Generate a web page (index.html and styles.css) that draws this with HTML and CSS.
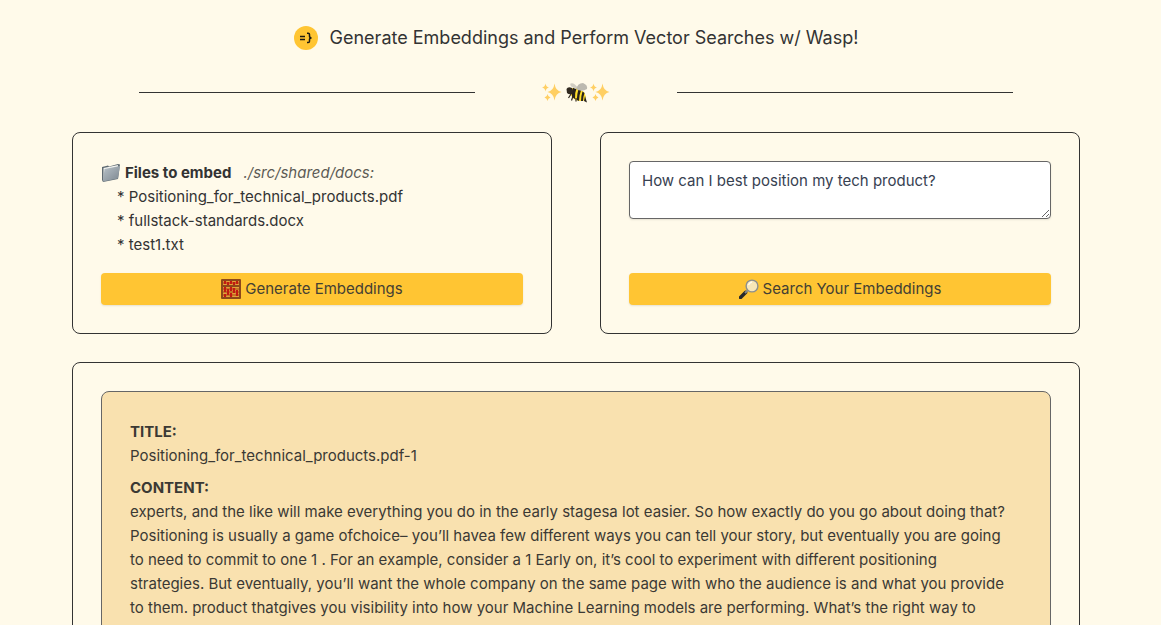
FILE: index.html
```html
<!DOCTYPE html>
<html lang="en">
<head>
<meta charset="utf-8">
<meta name="viewport" content="width=device-width, initial-scale=1">
<title>Generate Embeddings</title>
<link rel="stylesheet" href="styles.css">
</head>
<body>
<main class="page">
  <header class="header">
    <svg class="logo" viewBox="0 0 24 24" aria-hidden="true">
      <circle cx="12" cy="12" r="12" fill="#ffc533"/>
      <path d="M6 10.400h5M6 13.400h5M13 7.200h1.200q1.300 0 1.300 1.300v1.800q0 1.500 2 1.600q-2 .1-2 1.600v1.800q0 1.300-1.300 1.300H13" fill="none" stroke="#1c1a12" stroke-width="1.500"/>
    </svg>
    <h1 class="title">Generate Embeddings and Perform Vector Searches w/ Wasp!</h1>
  </header>

  <div class="divider">
    <span class="rule"></span>
    <svg class="bee" viewBox="0 0 68 24" aria-hidden="true">
      <defs>
        <g id="sparkles" fill="#ffcf63">
          <path d="M12.500 3.500Q13.500 11 19.500 12Q13.500 13 12.500 20.500Q11.500 13 5.500 12Q11.500 11 12.500 3.500Z"/>
          <path d="M3.500 3.500Q4 7 7 7.500Q4 8 3.500 11.500Q3 8 0 7.500Q3 7 3.500 3.500Z"/>
          <path d="M5.500 14Q6 17 8.500 17.500Q6 18 5.500 21Q5 18 2.500 17.500Q5 17 5.500 14Z"/>
        </g>
      </defs>
      <use href="#sparkles"/>
      <use href="#sparkles" x="48"/>
      <path d="M28.500 9Q32 6.500 35 8L42 12Q44.500 16 43.500 20Q38 22.500 32 19Q26.500 14 28.500 9Z" fill="#ffdd28"/>
      <path d="M31 8L34.500 8.500Q32.500 13 33 19L30 17Q29 12 31 8ZM36.500 9L39 10.500Q37 15 37 21L34.800 20Q35 14 36.500 9ZM40.500 11.500L42.500 13Q41 17 41 21L39 21Q39 16 40.500 11.500ZM43 16L45 22.500L42 21Z" fill="#29231b"/>
      <path d="M24.500 9Q26 6 30 8Q32 11 30 14Q27 15 25 13Z" fill="#30291f"/>
      <path d="M33.500 9Q27 6 28.500 3.500Q32 2 36 8Z" fill="#d2cec3"/>
      <path d="M34.500 9.500Q35 3 41 3Q46 5 45 9Q40 12 34.500 9.500Z" fill="#bcb9b0"/>
      <path d="M29 14L26.500 18M31 16L29.500 20.500M34 18L34 21.500" fill="none" stroke="#30291f" stroke-width="1.200"/>
    </svg>
    <span class="rule"></span>
  </div>

  <div class="panels">
    <section class="card panel">
      <div>
        <div class="files-head">
          <svg class="icon" viewBox="0 0 20 20" aria-hidden="true">
            <defs><linearGradient id="steel" x1="0" y1="0" x2="1" y2="1"><stop offset="0" stop-color="#b9c2c9"/><stop offset="1" stop-color="#7b868f"/></linearGradient></defs>
            <path d="M1 4L7 2.500L8 3.500L17 1L19 1.500L17 16L2 19L1 17Z" fill="#5f6a72"/>
            <path d="M2.500 5L17 2L16 15L2.500 17Z" fill="#f2f3f0"/>
            <path d="M3.500 6L19 3L17 15.500L2 18.500Z" fill="url(#steel)"/>
          </svg>
          <strong>Files to embed</strong>
          <em class="path">./src/shared/docs:</em>
        </div>
        <ul class="files">
          <li>Positioning_for_technical_products.pdf</li>
          <li>fullstack-standards.docx</li>
          <li>test1.txt</li>
        </ul>
      </div>
      <button class="button" type="button">
        <svg class="icon" viewBox="0 0 20 20" aria-hidden="true">
          <rect width="20" height="20" rx="1" fill="#8d481b"/>
          <path d="M2 2h16v4H2zM2 8h16v10H2z" fill="#e5a238"/>
          <path d="M2 4h16M2 10h16M2 13h16M2 16h16" stroke="#a34a16"/>
          <path d="M4 2v3M7 3v3M10 2v3M13 3v3M16 2v3M4 8v5M4 15v3M7 10v6M10 8v4M10 14v4M13 9v5M16 11v6" stroke="#c21b12" stroke-width="2.200"/>
        </svg>
        Generate Embeddings
      </button>
    </section>

    <section class="card panel">
      <textarea class="query" aria-label="Search query" rows="2">How can I best position my tech product?</textarea>
      <button class="button" type="button">
        <svg class="icon" viewBox="0 0 20 20" aria-hidden="true">
          <path d="M1.500 18.500L6.500 13.500" stroke="#28292b" stroke-width="3.600" stroke-linecap="round"/>
          <path d="M6 14L8.500 11.500" stroke="#85888a" stroke-width="2"/>
          <circle cx="13" cy="7" r="5.900" fill="#f8e7b8" stroke="#8b8f90" stroke-width="1.400"/>
          <path d="M9.500 6Q10.500 3.500 13 3" fill="none" stroke="#fffaf0" stroke-width="1.500"/>
        </svg>
        Search Your Embeddings
      </button>
    </section>
  </div>

  <section class="card">
    <article class="card result">
      <h2 class="label">TITLE:</h2>
      <p class="text">Positioning_for_technical_products.pdf-1</p>
      <h2 class="label label-next">CONTENT:</h2>
      <p class="text">experts, and the like will make everything you do in the early stagesa lot easier. So how exactly do you go about doing that?<br>Positioning is usually a game ofchoice– you’ll havea few different ways you can tell your story, but eventually you are going<br>to need to commit to one 1 . For an example, consider a 1 Early on, it’s cool to experiment with different positioning<br>strategies. But eventually, you’ll want the whole company on the same page with who the audience is and what you provide<br>to them. product thatgives you visibility into how your Machine Learning models are performing. What’s the right way to</p>
    </article>
  </section>
</main>
</body>
</html>
```
FILE: styles.css
```css
* {
  box-sizing: border-box;
  margin: 0;
  padding: 0;
}

html {
  height: 100%;
  overflow: hidden;
}

body {
  background: #fffaea;
  color: #333;
  font: 15px/24px Inter, "Liberation Sans", sans-serif;
}

.page {
  padding: 24px 81px 24px 72px;
}

.header {
  display: flex;
  justify-content: center;
  align-items: center;
  gap: 12px;
}

.logo {
  width: 24px;
  height: 24px;
}

.title {
  font-size: 18px;
  line-height: 28px;
  font-weight: 400;
}

.divider {
  display: flex;
  justify-content: space-evenly;
  align-items: center;
  margin: 28px 0;
}

.rule {
  width: 33.333%;
  height: 1px;
  background: #333;
}

.bee {
  width: 68px;
  height: 24px;
}

.card {
  border: 1px solid #333;
  border-radius: 8px;
  padding: 28px;
}

.panels {
  display: grid;
  grid-template-columns: 1fr 1fr;
  gap: 48px;
  margin-bottom: 28px;
}

.panel {
  display: flex;
  flex-direction: column;
  justify-content: space-between;
  gap: 16px;
}

.files-head {
  display: flex;
  align-items: center;
  gap: 4px;
}

.icon {
  width: 20px;
  height: 20px;
  flex: none;
}

.path {
  margin-left: 8px;
  color: #5c5b55;
}

.files {
  list-style: none;
  padding-left: 16px;
}

.files li::before {
  content: "* ";
}

.button {
  display: flex;
  justify-content: center;
  align-items: center;
  gap: 4px;
  height: 32px;
  border: 0;
  border-radius: 4px;
  background: #ffc533;
  box-shadow: 0 1px 2px rgb(0 0 0 / 10%);
  color: #444033;
  font: inherit;
}

.query {
  display: block;
  width: 100%;
  height: 58px;
  padding: 7px 12px;
  border: 1px solid #666;
  border-radius: 4px;
  background: #fff;
  box-shadow: 0 1px 2px rgb(0 0 0 / 10%);
  color: #374151;
  font: inherit;
  resize: vertical;
}

.result {
  border-color: #666;
  background: #f9e1af;
  color: #3b3934;
}

.label {
  font-size: 15px;
  font-weight: 700;
}

.label-next {
  margin-top: 8px;
}
```
